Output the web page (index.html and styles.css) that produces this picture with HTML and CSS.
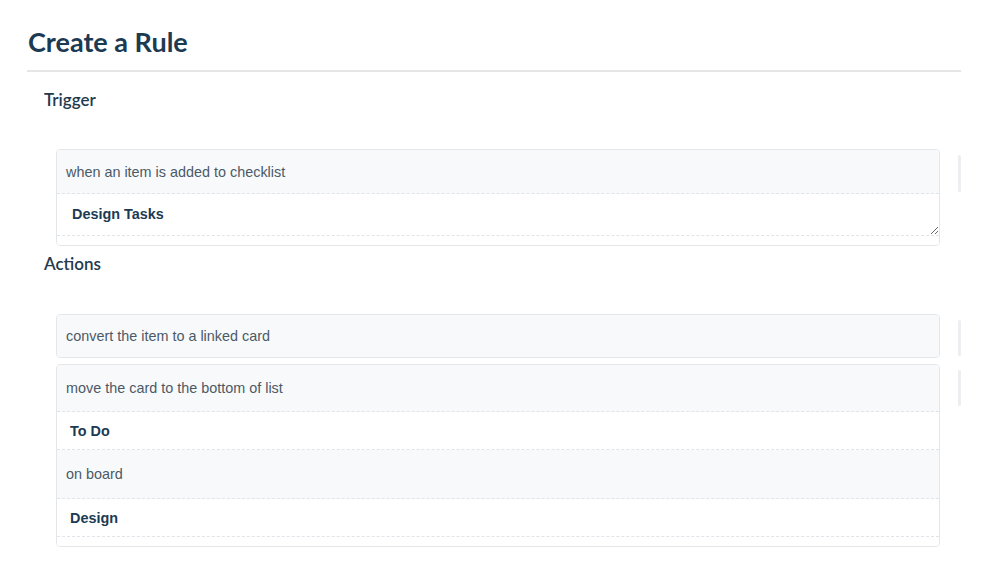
FILE: index.html
```html
<!DOCTYPE html>
<html>
<head>
<meta charset="utf-8">
<link rel="stylesheet" href="styles.css">
</head>
<body>
<div class="page">
  <h1 class="title">Create a Rule</h1>
  <div class="section">
    <h2 class="section-title">Trigger</h2>
    <div class="row">
      <div class="card">
        <div class="line line-desc">when an item is added to checklist</div>
        <textarea class="field" rows="1">Design Tasks</textarea>
        <div class="tail"></div>
      </div>
      <div class="handle handle-trigger"></div>
    </div>
  </div>
  <div class="section section-actions">
    <h2 class="section-title">Actions</h2>
    <div class="row">
      <div class="card">
        <div class="line line-single">convert the item to a linked card</div>
      </div>
      <div class="handle handle-single"></div>
    </div>
    <div class="row row-next">
      <div class="card">
        <div class="line line-desc line-first">move the card to the bottom of list</div>
        <div class="line line-value">To Do</div>
        <div class="line line-desc line-mid">on board</div>
        <div class="line line-value">Design</div>
        <div class="tail"></div>
      </div>
      <div class="handle handle-multi"></div>
    </div>
  </div>
</div>
</body>
</html>
```

FILE: styles.css
```css
html, body {
  margin: 0;
  padding: 0;
  background: #ffffff;
}

.page {
  width: 934px;
  margin-left: 27px;
  padding-top: 25px;
}

.title {
  margin: 0;
  padding: 0 0 11px 1px;
  font-family: Lato, "Liberation Sans", sans-serif;
  font-weight: 700;
  font-size: 27px;
  line-height: 34px;
  color: #1c3a52;
  border-bottom: 2px solid #e6e6e6;
}

.section {
  padding-left: 17px;
}

.section-title {
  margin: 0;
  padding-top: 17px;
  height: 60px;
  font-family: Lato, "Liberation Sans", sans-serif;
  font-weight: 600;
  font-size: 17px;
  line-height: 22px;
  color: #223a4e;
}

.section-actions .section-title {
  padding-top: 7px;
  height: 61px;
}

.row {
  display: flex;
  align-items: flex-start;
  padding-left: 12px;
}

.row-next {
  margin-top: 6px;
}

.card {
  width: 882px;
  border: 1px solid #e4e7ea;
  border-radius: 4px;
  background: #ffffff;
  overflow: hidden;
  font-family: "Liberation Sans", Arial, sans-serif;
  font-size: 14.4px;
}

.line {
  box-sizing: border-box;
  display: flex;
  align-items: center;
  padding-left: 9px;
  border-bottom: 1px dashed #e1e4e8;
}

.line-desc {
  height: 44px;
  background: #f8f9fb;
  color: #4b5966;
}

.line-first {
  height: 47px;
}

.line-mid {
  height: 49px;
}

.line-single {
  height: 42px;
  background: #f8f9fb;
  color: #4b5966;
  border-bottom: none;
}

.line-value {
  height: 38px;
  padding-left: 13px;
  font-weight: 700;
  color: #1c3a52;
  background: #ffffff;
}

.field {
  display: block;
  box-sizing: border-box;
  width: 100%;
  height: 42px;
  margin: 0;
  padding: 12px 15px 0 15px;
  border: none;
  border-bottom: 1px dashed #e1e4e8;
  outline: none;
  resize: vertical;
  overflow: hidden;
  font-family: "Liberation Sans", Arial, sans-serif;
  font-size: 14.4px;
  font-weight: 700;
  line-height: 17px;
  color: #1c3a52;
  background: #ffffff;
}

.tail {
  height: 9px;
  background: #ffffff;
}

.handle {
  width: 3px;
  margin-left: 18px;
  border-radius: 2px;
  background: #eceef1;
}

.handle-trigger {
  margin-top: 6px;
  height: 37px;
}

.handle-single {
  margin-top: 6px;
  height: 36px;
}

.handle-multi {
  margin-top: 6px;
  height: 36px;
}
```
